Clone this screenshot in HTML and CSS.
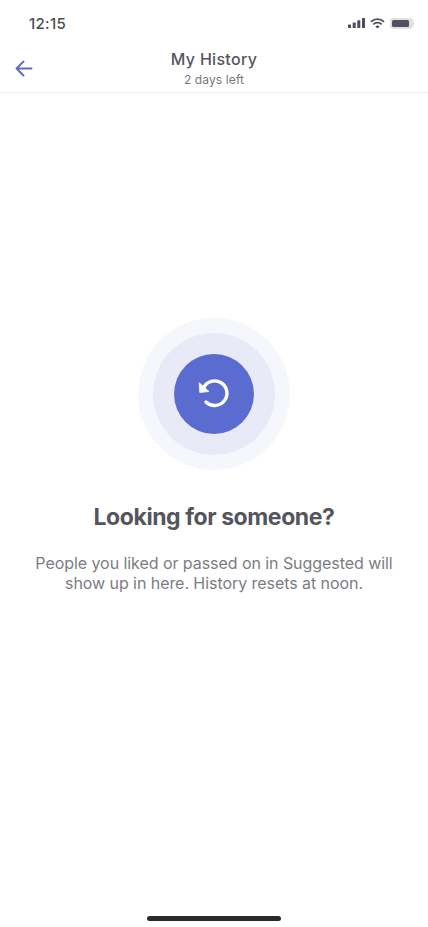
FILE: index.html
```html
<!DOCTYPE html>
<html lang="en">
<head>
<meta charset="utf-8">
<title>My History</title>
<link rel="stylesheet" href="styles.css">
</head>
<body>
<div class="app">
  <div class="status">
    <span class="time">12:15</span>
    <div class="status-icons">
      <svg class="signal" width="17" height="10" viewBox="0 0 17 10"><rect x="0" y="6.500" width="3" height="3.500" rx=".6"/><rect x="4.700" y="4.500" width="3" height="5.500" rx=".6"/><rect x="9.300" y="2.200" width="3" height="7.800" rx=".6"/><rect x="14" y="0" width="3" height="10" rx=".6"/></svg>
      <svg class="wifi" width="15" height="11" viewBox="0 0 15 11"><path d="M1 3.800a9.300 9.300 0 0 1 13 0"/><path d="M3.300 6.400a6 6 0 0 1 8.400 0"/><path class="wifi-dot" d="M7.500 10.600 5.400 8.500a3 3 0 0 1 4.200 0z"/></svg>
      <div class="battery"><div class="battery-fill"></div></div>
    </div>
  </div>
  <header class="nav">
    <svg class="back" width="18" height="17" viewBox="0 0 18 17"><path d="M16.500 8.500H1.500M8.500 1.500 1.500 8.500 8.500 15.500"/></svg>
    <div class="nav-title">
      <div class="title">My History</div>
      <div class="subtitle">2 days left</div>
    </div>
  </header>
  <main class="empty">
    <div class="ring-outer"><div class="ring-mid"><div class="ring-core">
      <svg class="reset" width="32" height="32" viewBox="0 0 32 32"><path class="reset-arc" d="M5.500 10A12.300 12.300 0 1 1 8 24"/><path class="reset-head" d="M1.200 4.800 1.800 14.500 11 13.500z"/></svg>
    </div></div></div>
    <h1 class="heading">Looking for someone?</h1>
    <p class="body">People you liked or passed on in Suggested will<br>show up in here. History resets at noon.</p>
  </main>
  <div class="home-bar"></div>
</div>
</body>
</html>
```
FILE: styles.css
```css
* { box-sizing: border-box; }
html, body { margin: 0; padding: 0; background: #fff; }
.app {
  width: 428px;
  height: 927px;
  display: flex;
  flex-direction: column;
  font-family: Inter, "Liberation Sans", sans-serif;
  overflow: hidden;
}
.status {
  height: 44px;
  padding: 2px 15px 0 29px;
  display: flex;
  align-items: center;
  justify-content: space-between;
  flex: none;
}
.time { font-size: 15px; font-weight: 500; color: #4c4c55; letter-spacing: .3px; }
.status-icons { display: flex; align-items: center; gap: 5px; }
.signal { fill: #4c4c58; }
.wifi { fill: none; stroke: #4c4c58; stroke-width: 1.800; }
.wifi-dot { fill: #4c4c58; stroke: none; }
.battery {
  position: relative;
  width: 23px;
  height: 11px;
  padding: 2px;
  border-radius: 3px;
  background: #dfdfe4;
}
.battery::after {
  content: "";
  position: absolute;
  right: -1px;
  top: 4px;
  width: 1px;
  height: 3px;
  background: #dfdfe4;
}
.battery-fill { width: 17px; height: 100%; border-radius: 1.500px; background: #50505f; }
.nav {
  height: 49px;
  flex: none;
  display: flex;
  align-items: center;
  justify-content: center;
  position: relative;
  border-bottom: 1px solid #eeeef0;
}
.back {
  position: absolute;
  left: 15px;
  top: 16px;
  fill: none;
  stroke: #5d6bc4;
  stroke-width: 1.900;
  stroke-linecap: round;
  stroke-linejoin: round;
}
.nav-title { text-align: center; padding-top: 1px; }
.title { font-size: 16px; font-weight: 500; line-height: 20px; color: #55555e; letter-spacing: .3px; }
.subtitle { font-size: 12px; line-height: 16px; color: #77777f; margin-top: 3px; letter-spacing: .12px; }
.empty {
  flex: 1;
  display: flex;
  flex-direction: column;
  align-items: center;
  padding-top: 225px;
}
.ring-outer {
  width: 152px;
  height: 152px;
  border-radius: 50%;
  background: #f6f7fd;
  display: flex;
  align-items: center;
  justify-content: center;
}
.ring-mid {
  width: 122px;
  height: 122px;
  border-radius: 50%;
  background: #e8eaf7;
  display: flex;
  align-items: center;
  justify-content: center;
}
.ring-core {
  width: 80px;
  height: 80px;
  border-radius: 50%;
  background: #5a6cd0;
  display: flex;
  align-items: center;
  justify-content: center;
}
.reset-arc { fill: none; stroke: #fff; stroke-width: 3.400; stroke-linecap: round; }
.reset-head { fill: #fff; stroke: #fff; stroke-width: .8; stroke-linejoin: round; }
.heading {
  margin: 33px 0 0;
  font-size: 23px;
  line-height: 28px;
  font-weight: 700;
  color: #55555e;
  letter-spacing: -.42px;
}
.body {
  margin: 23px 0 0;
  font-size: 16px;
  line-height: 19.500px;
  color: #7c7c84;
  text-align: center;
  letter-spacing: -.06px;
}
.home-bar {
  position: absolute;
  left: 147px;
  top: 916px;
  width: 134px;
  height: 5px;
  border-radius: 3px;
  background: #2a2a2e;
}
```
